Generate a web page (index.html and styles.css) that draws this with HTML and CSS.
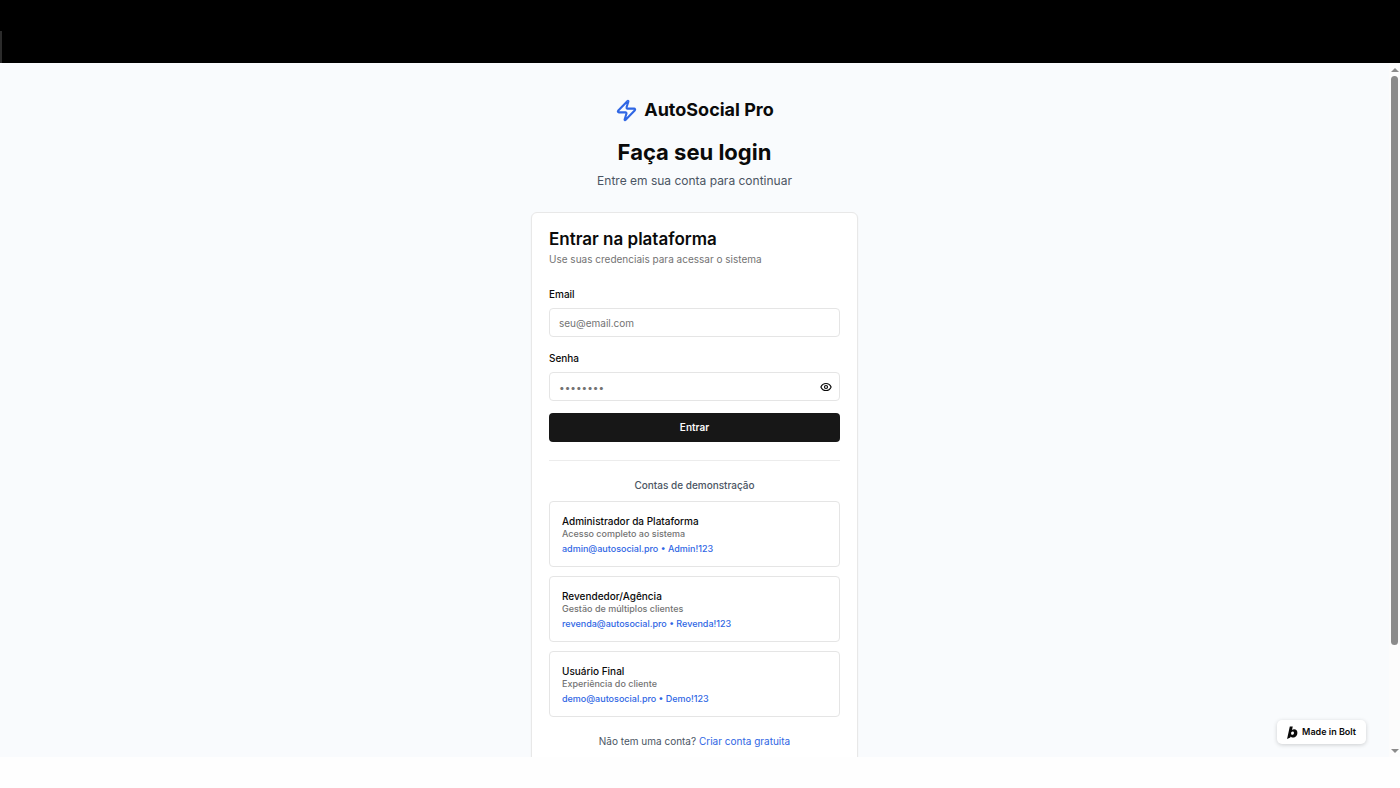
FILE: index.html
```
<!DOCTYPE html>
<html lang="pt-BR">

<head>
    <meta charset="UTF-8">
    <meta name="viewport" content="width=device-width, initial-scale=1.0">
    <title>AutoSocial Pro - Login</title>
    <link rel="stylesheet" href="styles.css">
</head>

<body>

    <div class="topbar"></div>

    <div class="window">
        <main class="page">
            <header class="header">
                <div class="logo">
                    <svg class="logo-icon" viewBox="0 0 24 24" fill="none" stroke="currentColor" stroke-width="2.2" stroke-linecap="round" stroke-linejoin="round" aria-hidden="true">
                        <path d="M4 14a1 1 0 0 1-.78-1.63l9.9-10.2a.5.5 0 0 1 .86.46l-1.92 6.02A1 1 0 0 0 13 10h7a1 1 0 0 1 .78 1.63l-9.9 10.2a.5.5 0 0 1-.86-.46l1.92-6.02A1 1 0 0 0 11 14z"/>
                    </svg>
                    <span>AutoSocial Pro</span>
                </div>
                <h1>Faça seu login</h1>
                <p>Entre em sua conta para continuar</p>
            </header>

            <section class="card">
                <h2>Entrar na plataforma</h2>
                <p class="card-description">Use suas credenciais para acessar o sistema</p>

                <form class="form">
                    <div class="field">
                        <label for="email">Email</label>
                        <input type="email" id="email" placeholder="seu@email.com">
                    </div>
                    <div class="field">
                        <label for="password">Senha</label>
                        <div class="password">
                            <input type="password" id="password" placeholder="••••••••">
                            <button type="button" class="toggle" aria-label="Mostrar senha">
                                <svg viewBox="0 0 24 24" fill="none" stroke="currentColor" stroke-width="2.4" stroke-linecap="round" stroke-linejoin="round" aria-hidden="true">
                                    <path d="M2.06 12.35a1 1 0 0 1 0-.7 10.75 10.75 0 0 1 19.88 0 1 1 0 0 1 0 .7 10.75 10.75 0 0 1-19.88 0"/>
                                    <circle cx="12" cy="12" r="3"/>
                                </svg>
                            </button>
                        </div>
                    </div>
                    <button type="submit" class="submit">Entrar</button>
                </form>

                <div class="demo">
                    <h3>Contas de demonstração</h3>
                    <button type="button" class="account">
                        <span class="account-name">Administrador da Plataforma</span>
                        <span class="account-info">Acesso completo ao sistema</span>
                        <span class="account-login">admin@autosocial.pro • Admin!123</span>
                    </button>
                    <button type="button" class="account">
                        <span class="account-name">Revendedor/Agência</span>
                        <span class="account-info">Gestão de múltiplos clientes</span>
                        <span class="account-login">revenda@autosocial.pro • Revenda!123</span>
                    </button>
                    <button type="button" class="account">
                        <span class="account-name">Usuário Final</span>
                        <span class="account-info">Experiência do cliente</span>
                        <span class="account-login">demo@autosocial.pro • Demo!123</span>
                    </button>
                </div>

                <p class="signup">Não tem uma conta? <a href="#">Criar conta gratuita</a></p>
            </section>
        </main>

        <div class="scrollbar">
            <span class="arrow arrow-up"></span>
            <span class="thumb"></span>
            <span class="arrow arrow-down"></span>
        </div>

        <a class="badge" href="#">
            <svg viewBox="0 0 20 24" fill="currentColor" aria-hidden="true">
                <path fill-rule="evenodd" d="M5 1h5.500L9 7.500c1.200-1 2.500-1.500 4-1.500 4 0 6 2.700 6 6.300 0 5-3.500 8.900-8 8.900-2 0-3.600-.8-4.500-2L6 21 0 24zM10.300 10.300c-1.700 0-2.900 1.500-2.900 3.400 0 1.500.8 2.600 2.300 2.600 1.800 0 3-1.500 3-3.400 0-1.600-.8-2.600-2.400-2.600z"/>
            </svg>
            Made in Bolt
        </a>
    </div>

</body>

</html>
```

FILE: styles.css
```
* {
    box-sizing: border-box;
}

body {
    display: flex;
    flex-direction: column;
    height: 100vh;
    margin: 0;
    padding-bottom: 31px;
    overflow: hidden;
    font-family: Inter, "Liberation Sans", sans-serif;
    font-size: 10px;
    line-height: 14px;
    color: #0a0a0a;
    background-color: #fefefe;
}

h1,
h2,
h3,
p {
    margin: 0;
}

button,
input {
    font-family: inherit;
    font-size: inherit;
    line-height: inherit;
}

a {
    color: #2f66e4;
    text-decoration: none;
}

.topbar {
    flex: none;
    height: 63px;
    background: linear-gradient(#2b2b2b, #2b2b2b) left bottom / 2px 32px no-repeat #000;
}

.window {
    position: relative;
    display: flex;
    flex: 1;
    min-height: 0;
    overflow: hidden;
    background-color: #f9fbfd;
}

.page {
    display: flex;
    flex: 1;
    flex-direction: column;
    align-items: center;
    padding: 35px 12px;
}

.header {
    margin-bottom: 22px;
    text-align: center;
}

.logo {
    display: flex;
    align-items: center;
    justify-content: center;
    gap: 6px;
    margin-bottom: 17px;
    font-size: 18px;
    line-height: 24px;
    font-weight: 700;
}

.logo-icon {
    width: 23px;
    height: 23px;
    color: #2f66e4;
}

.header h1 {
    margin-bottom: 7px;
    font-size: 22px;
    line-height: 26px;
    font-weight: 700;
}

.header p {
    font-size: 12px;
    line-height: 18px;
    color: #4b5563;
}

.card {
    width: 100%;
    max-width: 327px;
    padding: 17px;
    border: 1px solid #e8e8e8;
    border-radius: 6px;
    background-color: #fff;
    box-shadow: 0 1px 2px rgba(0, 0, 0, 0.05);
}

.card h2 {
    margin-bottom: 4px;
    font-size: 17px;
    line-height: 18px;
    font-weight: 600;
}

.card-description {
    margin-bottom: 21px;
    color: #737373;
}

.form {
    display: flex;
    flex-direction: column;
    gap: 12px;
}

.field label {
    display: block;
    margin-bottom: 7px;
    font-weight: 500;
}

.field:first-child {
    margin-bottom: 2px;
}

.field input {
    display: block;
    width: 100%;
    height: 29px;
    padding: 0 9px;
    border: 1px solid #e5e5e5;
    border-radius: 4px;
    background-color: #fff;
    color: #0a0a0a;
}

.field input::placeholder {
    color: #737373;
}

.password {
    position: relative;
}

.toggle {
    position: absolute;
    top: 0;
    right: 0;
    display: flex;
    align-items: center;
    justify-content: center;
    width: 29px;
    height: 29px;
    padding: 0;
    border: 0;
    background: none;
    color: #0a0a0a;
    cursor: pointer;
}

.toggle svg {
    width: 12px;
    height: 12px;
}

.submit {
    height: 29px;
    padding: 0 12px 1px;
    border: 0;
    border-radius: 4px;
    background-color: #171717;
    color: #fafafa;
    font-weight: 600;
    cursor: pointer;
}

.demo {
    display: flex;
    flex-direction: column;
    gap: 9px;
    margin-top: 18px;
    padding-top: 17px;
    border-top: 1px solid #ececec;
}

.demo h3 {
    font-size: 10px;
    line-height: 14px;
    font-weight: 500;
    color: #4b5563;
    text-align: center;
}

.account {
    display: flex;
    flex-direction: column;
    padding: 12px 12px 11px;
    border: 1px solid #e5e5e5;
    border-radius: 4px;
    background-color: #fff;
    color: #0a0a0a;
    text-align: left;
    cursor: pointer;
}

.account-name {
    font-weight: 500;
}

.account-info {
    margin-bottom: 3px;
    font-size: 9px;
    line-height: 12px;
    font-weight: 500;
    color: #737373;
}

.account-login {
    font-size: 9px;
    line-height: 12px;
    font-weight: 500;
    color: #2f66e4;
}

.signup {
    margin-top: 17px;
    color: #4b5563;
    text-align: center;
}

.scrollbar {
    display: flex;
    flex: none;
    flex-direction: column;
    align-items: center;
    width: 11px;
    padding: 5px 0 4px;
    background-color: #fcfcfc;
}

.arrow {
    border-right: 4px solid transparent;
    border-left: 4px solid transparent;
}

.arrow-up {
    border-bottom: 4px solid #8b8b8b;
}

.arrow-down {
    margin-top: auto;
    border-top: 4px solid #8b8b8b;
}

.thumb {
    width: 7px;
    height: 83%;
    margin-top: 4px;
    border-radius: 4px;
    background-color: #8b8b8b;
}

.badge {
    position: absolute;
    right: 34px;
    bottom: 13px;
    display: flex;
    align-items: center;
    gap: 4px;
    padding: 5px 10px;
    border-radius: 5px;
    background-color: #fff;
    box-shadow: 0 1px 4px rgba(0, 0, 0, 0.18);
    color: #0a0a0a;
    font-size: 9px;
    font-weight: 600;
}

.badge svg {
    width: 11px;
    height: 13px;
}
```
